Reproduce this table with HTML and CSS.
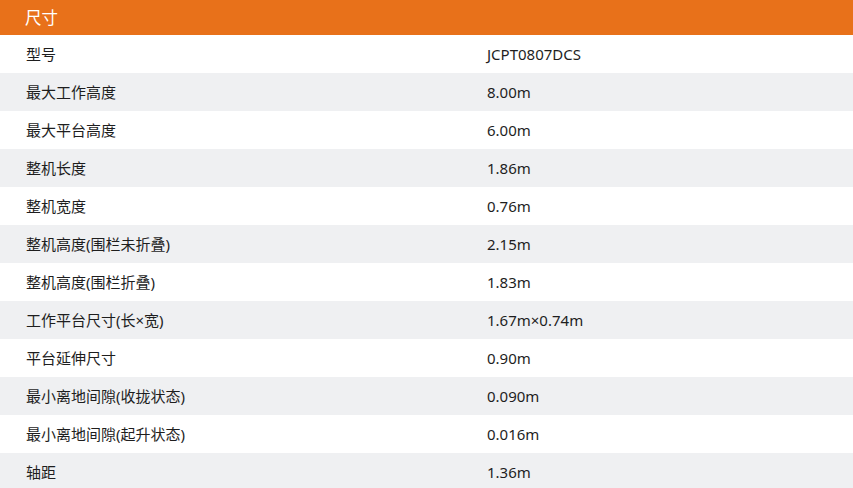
FILE: index.html
```html
<!DOCTYPE html>
<html lang="zh">
<head>
<meta charset="utf-8">
<link rel="stylesheet" href="styles.css">
</head>
<body>
<div class="spec">
  <div class="spec-head">尺寸</div>
  <div class="row"><span class="k">型号</span><span class="v">JCPT0807DCS</span></div>
  <div class="row"><span class="k">最大工作高度</span><span class="v">8.00m</span></div>
  <div class="row"><span class="k">最大平台高度</span><span class="v">6.00m</span></div>
  <div class="row"><span class="k">整机长度</span><span class="v">1.86m</span></div>
  <div class="row"><span class="k">整机宽度</span><span class="v">0.76m</span></div>
  <div class="row"><span class="k">整机高度(围栏未折叠)</span><span class="v">2.15m</span></div>
  <div class="row"><span class="k">整机高度(围栏折叠)</span><span class="v">1.83m</span></div>
  <div class="row"><span class="k">工作平台尺寸(长×宽)</span><span class="v">1.67m×0.74m</span></div>
  <div class="row"><span class="k">平台延伸尺寸</span><span class="v">0.90m</span></div>
  <div class="row"><span class="k">最小离地间隙(收拢状态)</span><span class="v">0.090m</span></div>
  <div class="row"><span class="k">最小离地间隙(起升状态)</span><span class="v">0.016m</span></div>
  <div class="row"><span class="k">轴距</span><span class="v">1.36m</span></div>
</div>
</body>
</html>
```
FILE: styles.css
```css
html, body {
  margin: 0;
  padding: 0;
  background: #ffffff;
}
body {
  font-family: "Noto Sans", "Noto Sans CJK SC", sans-serif;
  color: #1e1e1e;
  overflow: hidden;
}
.spec {
  width: 853px;
}
.spec-head {
  height: 35px;
  background: #e8711a;
  color: #ffffff;
  font-size: 16.5px;
  line-height: 35px;
  padding-left: 25px;
}
.row {
  display: grid;
  grid-template-columns: 461px 1fr;
  height: 38px;
  align-items: center;
  font-size: 15px;
  padding-left: 26px;
}
.row:nth-child(odd) {
  background: #eff0f2;
}
.k, .v {
  line-height: 38px;
  white-space: nowrap;
}
```
